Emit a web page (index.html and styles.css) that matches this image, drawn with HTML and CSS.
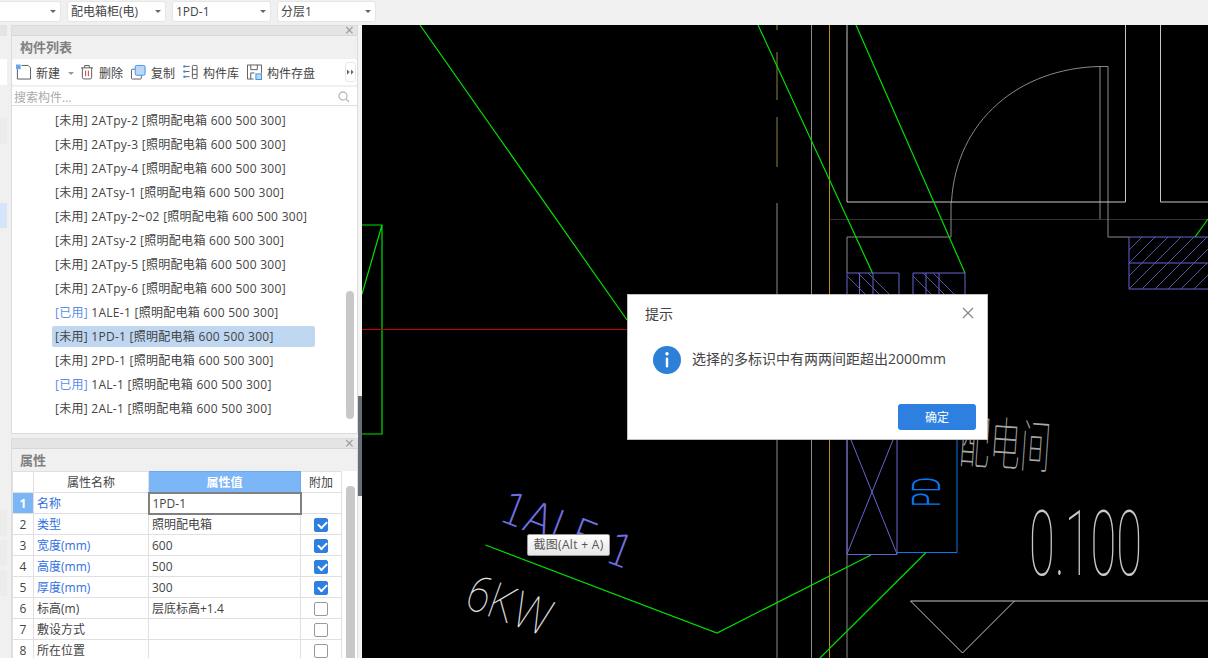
FILE: index.html
```html
<!DOCTYPE html>
<html lang="zh-CN">
<head>
<meta charset="utf-8">
<title>构件列表</title>
<link rel="stylesheet" href="styles.css">
</head>
<body>
<div class="app">
  <header class="topbar">
    <div class="select select-first"><span class="caret"></span></div>
    <div class="select"><span>配电箱柜(电)</span><span class="caret"></span></div>
    <div class="select"><span>1PD-1</span><span class="caret"></span></div>
    <div class="select"><span>分层1</span><span class="caret"></span></div>
  </header>
  <main class="main">
    <aside class="strip">
      <div class="strip-a"></div><div class="strip-b"></div><div class="strip-c"></div><div class="strip-d"></div>
      <div class="strip-e"></div><div class="strip-f"></div><div class="strip-f"></div><div class="strip-f"></div>
    </aside>
    <section class="panels">
      <div class="panel panel-list">
        <div class="grip"><span class="grip-x">×</span></div>
        <h2 class="panel-title">构件列表</h2>
        <div class="toolbar">
          <span class="tool tool-new">
            <svg class="ico" viewBox="0 0 16 16"><path class="s-dark" d="M1.500 5v10.500h14V3.500L13 1H6"/><rect class="f-dots" x="0" y="0" width="5" height="5"/></svg>新建<span class="tool-caret"></span></span>
          <span class="tool tool-del">
            <svg class="ico ico-trash" viewBox="0 0 13 16"><path class="s-dark" d="M0 3.500h13M4 3.500V1h5v2.500M1.500 3.500V14q0 1.500 1.500 1.500h7q1.500 0 1.500-1.500V3.500"/><path class="s-red" d="M5 6.500v6M8 6.500v6"/></svg>删除</span>
          <span class="tool tool-copy">
            <svg class="ico" viewBox="0 0 16 16"><path class="s-dark" d="M4 5H1.500q-1 0-1 1v8.500q0 1 1 1H10q1 0 1-1V12"/><rect class="f-blue" x="4.500" y="1" width="10.500" height="10.500" rx="1.500"/></svg>复制</span>
          <span class="tool tool-lib">
            <svg class="ico" viewBox="0 0 16 16"><path class="s-cyan" d="M1 2h6M1 7.500h6M1 13h6"/><circle class="dot" cx="1.500" cy="2" r="1.300"/><circle class="dot" cx="1.500" cy="7.500" r="1.300"/><circle class="dot" cx="1.500" cy="13" r="1.300"/><rect class="s-dark" x="10" y="1" width="5" height="14" rx="1"/><path class="s-dark" d="M10 5.500h5M10 10.500h5"/></svg>构件库</span>
          <span class="tool tool-save">
            <svg class="ico" viewBox="0 0 16 16"><path class="s-dark" d="M7 15.500H.5V.5h15V9M4 .5v5h7v-5M4 15.500V9h4"/><rect class="f-blue" x="9.500" y="10" width="6" height="6"/></svg>构件存盘</span>
          <span class="more"><svg class="more-ico" viewBox="0 0 8 6"><path d="M0 0l3 3-3 3zM4.500 0l3 3-3 3z"/></svg></span>
        </div>
        <div class="search"><span>搜索构件...</span>
          <svg class="search-ico" viewBox="0 0 12 12"><circle cx="5" cy="5" r="4"/><path d="M8 8l3 3"/></svg>
        </div>
        <div class="list">
          <ul class="rows">
            <li><span>[未用]</span> 2ATpy-2 [照明配电箱 600 500 300]</li>
            <li><span>[未用]</span> 2ATpy-3 [照明配电箱 600 500 300]</li>
            <li><span>[未用]</span> 2ATpy-4 [照明配电箱 600 500 300]</li>
            <li><span>[未用]</span> 2ATsy-1 [照明配电箱 600 500 300]</li>
            <li><span>[未用]</span> 2ATpy-2~02 [照明配电箱 600 500 300]</li>
            <li><span>[未用]</span> 2ATsy-2 [照明配电箱 600 500 300]</li>
            <li><span>[未用]</span> 2ATpy-5 [照明配电箱 600 500 300]</li>
            <li><span>[未用]</span> 2ATpy-6 [照明配电箱 600 500 300]</li>
            <li><span class="used">[已用]</span> 1ALE-1 [照明配电箱 600 500 300]</li>
            <li class="selected"><span>[未用]</span> 1PD-1 [照明配电箱 600 500 300]</li>
            <li><span>[未用]</span> 2PD-1 [照明配电箱 600 500 300]</li>
            <li><span class="used">[已用]</span> 1AL-1 [照明配电箱 600 500 300]</li>
            <li><span>[未用]</span> 2AL-1 [照明配电箱 600 500 300]</li>
          </ul>
          <div class="scroll scroll-list"></div>
        </div>
      </div>
      <div class="panel panel-props">
        <div class="grip"><span class="grip-x">×</span></div>
        <h2 class="panel-title">属性</h2>
        <div class="props">
          <table class="ptable">
            <thead><tr><th class="c-idx"></th><th class="c-name">属性名称</th><th class="c-val active">属性值</th><th class="c-add">附加</th></tr></thead>
            <tbody>
              <tr><td class="idx idx-on">1</td><td class="link">名称</td><td class="edit">1PD-1</td><td></td></tr>
              <tr><td class="idx">2</td><td class="link">类型</td><td>照明配电箱</td><td class="chk"><span class="box on"></span></td></tr>
              <tr><td class="idx">3</td><td class="link">宽度(mm)</td><td>600</td><td class="chk"><span class="box on"></span></td></tr>
              <tr><td class="idx">4</td><td class="link">高度(mm)</td><td>500</td><td class="chk"><span class="box on"></span></td></tr>
              <tr><td class="idx">5</td><td class="link">厚度(mm)</td><td>300</td><td class="chk"><span class="box on"></span></td></tr>
              <tr><td class="idx">6</td><td>标高(m)</td><td>层底标高+1.4</td><td class="chk"><span class="box"></span></td></tr>
              <tr><td class="idx">7</td><td>敷设方式</td><td></td><td class="chk"><span class="box"></span></td></tr>
              <tr><td class="idx">8</td><td>所在位置</td><td></td><td class="chk"><span class="box"></span></td></tr>
            </tbody>
          </table>
          <div class="scroll scroll-props"></div>
        </div>
      </div>
    </section>
    <div class="splitter"><div class="handle"></div></div>
    <section class="canvas">
      <svg class="cad" viewBox="362 25 846 633" width="846" height="633">
        <g class="c-dim"><path d="M829 219.500H1208"/></g>
        <g class="c-olive"><path d="M777 25v5M777 52v48M777 117v50"/></g>
        <g class="c-gray">
          <path d="M777 203V658M811.500 25V658"/>
          <path d="M847 439V658"/>
          <path d="M847 273V237H951V202M1100 219V66.500H1108V237H1129"/>
          <path d="M951.500 202C956 120 1020 68 1100 66.500"/>
        </g>
        <g class="c-white">
          <path d="M847 25V202H1125.500V25M1160.500 25V202H1208"/>
          <path d="M910.500 601H1208M1014.500 601L962.500 653L910.500 601"/>
        </g>
        <path class="c-orange" d="M829.500 25V658"/>
        <g class="c-purple">
          <path d="M847 294V273H899V294M859.500 273V294M873 273V294M913 294V273H965V294M926 273V294M939 273V294"/>
          <path class="thin" d="M847 276L865 294M858 273L879 294M868 273L889 294M913 276L931 294M923 273L944 294M933 273L954 294"/>
          <path d="M1129 289V237H1208M1129 263H1208M1129 289H1208"/>
          <path class="thin" d="M1129 250L1142 237M1129 263L1155 237M1142 263L1168 237M1155 263L1181 237M1168 263L1194 237M1181 263L1207 237M1194 263L1208 249M1129 276L1142 263M1129 289L1155 263M1142 289L1168 263M1155 289L1181 263M1168 289L1194 263M1181 289L1207 263M1194 289L1208 275"/>
          <path d="M847 430V554.500H897V430"/>
          <path d="M847 554L897 430M847 430L897 554"/>
        </g>
        <path class="c-blue" d="M897 552.500H957V430"/>
        <g class="c-green">
          <path d="M420 25L627 320M758 25L872.500 273M856 25L965 273M1208 219L1195 237"/>
          <path d="M362 225H382V434H362M382 225L362 294"/>
          <path d="M485.500 545L717 633L871 555M926 552.500L820 658"/>
        </g>
        <path class="c-red" d="M362 329.500H627"/>
        <text class="t-pd" transform="translate(940 507) rotate(-90) scale(.62 1)">PD</text>
        <text class="t-num" transform="translate(1029 575) scale(.98 1.9)">0.100</text>
        <text class="t-room" transform="translate(958 462) rotate(4) scale(.85 1.6)">配电间</text>
        <text class="t-tag" transform="translate(497 520) rotate(21) scale(1.1 1.25)">1ALE-1</text>
        <text class="t-kw" transform="translate(463 607) rotate(20) scale(1.15 1.4)">6KW</text>
      </svg>
      <div class="tooltip">截图(Alt + A)</div>
      <div class="dialog">
        <div class="dlg-head"><span>提示</span>
          <svg class="dlg-x" viewBox="0 0 12 12"><path d="M1 1l10 10M11 1L1 11"/></svg>
        </div>
        <div class="dlg-body">
          <svg class="dlg-ico" viewBox="0 0 28 28"><circle cx="14" cy="14" r="14"/><rect x="12.800" y="11.500" width="2.400" height="10" rx="1.200"/><circle cx="14" cy="7.800" r="1.700"/></svg>
          <p>选择的多标识中有两两间距超出2000mm</p>
        </div>
        <div class="dlg-foot"><button class="ok">确定</button></div>
      </div>
    </section>
  </main>
</div>
</body>
</html>
```
FILE: styles.css
```css
* { box-sizing: border-box; }
html, body { margin: 0; padding: 0; height: 100%; overflow: hidden; }
body {
  font-family: "Open Sans", "Noto Sans CJK SC", sans-serif;
  font-size: 12px;
  color: #444;
  background: #f0f0f0;
}
.app { width: 1208px; height: 658px; display: flex; flex-direction: column; }

.topbar {
  height: 25px;
  flex: none;
  display: flex;
  gap: 6px;
  padding: 1px 0 0;
  margin-left: -38px;
  background: #f0f0f0;
}
.select {
  width: 99px;
  height: 21px;
  display: flex;
  align-items: center;
  justify-content: space-between;
  padding: 0 4px 0 3px;
  font-size: 12px;
  line-height: 21px;
  background: #fff;
  border: 1px solid #e6e6e6;
  border-radius: 3px;
  color: #444;
}
.select-first { justify-content: flex-end; }
.caret {
  width: 0; height: 0;
  border-left: 3px solid transparent;
  border-right: 3px solid transparent;
  border-top: 3px solid #666;
}

.main { flex: 1; display: flex; min-height: 0; }

.strip { width: 11px; flex: none; display: flex; flex-direction: column; }
.strip div { width: 7px; background: #e8e8e8; }
.strip-a { height: 11px; background: #e4e4e4 !important; }
.strip-b { height: 23px; background: #f0f0f0 !important; }
.strip-c { height: 26px; background: #fff !important; margin-bottom: 33px; }
.strip-d { height: 26px; background: #ececec !important; margin-bottom: 59px; }
.strip-e { height: 25px; background: #d5e6fa !important; margin-bottom: 282px; }
.strip-f { height: 26px; background: #ececec !important; margin-bottom: 4px; }

.panels { width: 347px; flex: none; display: flex; flex-direction: column; gap: 4px; }
.panel { display: flex; flex-direction: column; background: #f0f0f0; border-left: 1px solid #dcdcdc; border-right: 1px solid #dcdcdc; }
.panel-list { height: 409px; }
.panel-props { flex: 1; min-height: 0; }
.grip {
  height: 11px;
  flex: none;
  background: #e4e4e4;
  border-top: 1px solid #dcdcdc;
  border-bottom: 1px solid #d6d6d6;
  display: flex;
  justify-content: flex-end;
  align-items: center;
  padding-right: 3px;
}
.grip-x { font-size: 16px; line-height: 9px; color: #999; }
.panel-title {
  margin: 0;
  height: 22px;
  flex: none;
  padding-left: 8px;
  font-size: 13px;
  line-height: 22px;
  font-weight: 700;
  color: #808080;
}
.toolbar {
  height: 26px;
  margin-top: 1px;
  flex: none;
  display: flex;
  align-items: center;
  padding-left: 4px;
  background: #fff;
  border-radius: 3px;
  position: relative;
  color: #444;
}
.tool { display: flex; align-items: center; gap: 5px; padding-top: 2px; }
.ico { width: 15px; height: 16px; flex: none; fill: none; margin-top: -2px; }
.ico-trash { width: 12px; margin-right: 1px; }
.s-dark { fill: none; stroke: #555; stroke-width: 1; }
.s-red { fill: none; stroke: #c83030; stroke-width: 1; }
.s-cyan { fill: none; stroke: #555; stroke-width: 1; }
.dot { fill: #3d8fe0; }
.f-dots { fill: #6aa6e8; }
.f-blue { fill: #bcd6f5; stroke: #3d8fe0; stroke-width: 1; }
.tool-new { width: 65px; }
.tool-caret {
  width: 0; height: 0; margin-left: 3px;
  border-left: 3px solid transparent;
  border-right: 3px solid transparent;
  border-top: 3px solid #999;
}
.tool-del { width: 50px; }
.tool-copy { width: 52px; }
.tool-lib { width: 64px; }
.more {
  position: absolute;
  right: 1px;
  top: 3px;
  width: 11px;
  height: 20px;
  display: flex;
  align-items: center;
  justify-content: center;
  border: 1px solid #e8e8e8;
  border-radius: 3px;
}
.more-ico { width: 7px; height: 6px; fill: #666; }
.search {
  margin-top: 2px;
  height: 18px;
  flex: none;
  display: flex;
  align-items: center;
  justify-content: space-between;
  padding: 1px 7px 0 2px;
  background: #fff;
  color: #aaa;
}
.search-ico { width: 12px; height: 12px; fill: none; stroke: #bbb; stroke-width: 1.300; }
.list {
  flex: 1;
  background: #fff;
  border-top: 1px solid #e0e0e0;
  border-bottom: 1px solid #dcdcdc;
  position: relative;
}
.rows { list-style: none; margin: 0; padding: 4px 0 0 40px; letter-spacing: .27px; }
.rows li {
  width: 263px;
  height: 21px;
  margin-bottom: 3px;
  padding-left: 3px;
  line-height: 21px;
  white-space: nowrap;
  border-radius: 2px;
  color: #444;
}
.used { color: #5b8de8; }
.rows .selected { background: #bfd7f0; }
.scroll { position: absolute; background: #c8c8c8; border-radius: 4px; }
.scroll-list { left: 334px; top: 185px; width: 8px; height: 128px; }

.props { flex: 1; min-height: 0; position: relative; background: #fff; overflow: hidden; }
.ptable {
  width: 330px;
  table-layout: fixed;
  border-collapse: collapse;
  font-size: 12px;
  color: #444;
}
.ptable th, .ptable td {
  height: 21px;
  padding: 0 3px;
  border: 1px solid #e0e0e0;
  font-weight: 400;
  white-space: nowrap;
}
.ptable th { height: 21px; text-align: center; }
.c-idx { width: 21px; }
.c-name { width: 115px; }
.c-val { width: 152px; }
.c-add { width: 41px; }
.ptable .active { background: #7db6f7; color: #fff; font-weight: 700; border-color: #6aa8f0; }
.ptable .idx { text-align: center; padding: 0; }
.ptable .idx-on { background: #7db6f7; color: #fff; font-weight: 700; }
.link { color: #2f6fe0; }
.ptable .edit { border: 2px solid #808080; }
.chk { text-align: center; }
.box {
  display: inline-block;
  width: 14px;
  height: 14px;
  vertical-align: middle;
  border: 1px solid #999;
  border-radius: 2px;
  background: #fff;
  position: relative;
}
.box.on { background: #2d80e0; border-color: #2d80e0; }
.box.on::after {
  content: "";
  position: absolute;
  left: 3px;
  top: 2px;
  width: 7px;
  height: 4px;
  border-left: 2px solid #fff;
  border-bottom: 2px solid #fff;
  transform: rotate(-45deg);
}
.scroll-props { left: 334px; top: 15px; width: 9px; height: 190px; }

.splitter { width: 4px; flex: none; padding-top: 371px; background: #f4f4f4; }
.handle { height: 100px; background: #666e7a; }

.canvas { flex: 1; position: relative; background: #000; overflow: hidden; }
.cad { display: block; fill: none; }
.cad path { stroke-width: 1; fill: none; }
.c-dim path { stroke: #333; }
.c-olive path { stroke: #46421e; stroke-width: 2; }
.c-gray path { stroke: #8a8a8a; }
.c-white path { stroke: #c8c8c8; }
.cad .c-orange { stroke: #c08a10; }
.c-purple path { stroke: #6464d0; }
.c-purple .thin { stroke: #5555b0; }
.cad .c-blue { stroke: #0a78f0; }
.cad .c-green path { stroke: #00e000; stroke-width: 1.200; }
.cad .c-red { stroke: #d00000; }
.cad text { font-family: "Roboto", sans-serif; font-weight: 100; }
.cad .t-pd { fill: #0a78f0; font-size: 38px; font-weight: 300; }
.t-num { fill: #c8c8c8; font-size: 48px; }
.cad .t-room { fill: #a8a8a8; font-size: 36px; font-family: "Noto Sans CJK SC", sans-serif; }
.cad .t-tag { fill: #6f6fe0; font-size: 36px; font-family: "DejaVu Sans", sans-serif; font-weight: 200; }
.t-kw { fill: #e0e0e0; font-size: 36px; }

.tooltip {
  position: absolute;
  left: 165px;
  top: 509px;
  width: 83px;
  height: 22px;
  text-align: center;
  line-height: 20px;
  font-size: 12px;
  letter-spacing: .3px;
  color: #555;
  background: linear-gradient(#ffffff, #e6e6e6);
  border: 1px solid #999;
  border-radius: 2px;
}
.dialog {
  position: absolute;
  left: 265px;
  top: 269px;
  width: 361px;
  height: 146px;
  display: flex;
  flex-direction: column;
  background: #fff;
  border: 1px solid #c0c0c0;
}
.dlg-head {
  height: 36px;
  flex: none;
  padding: 0 13px 0 17px;
  display: flex;
  align-items: center;
  justify-content: space-between;
  font-size: 14px;
  color: #444;
}
.dlg-x { width: 12px; height: 12px; fill: none; stroke: #888; stroke-width: 1.200; }
.dlg-body { display: flex; align-items: center; gap: 11px; padding: 15px 0 0 25px; }
.dlg-ico { width: 28px; height: 28px; flex: none; }
.dlg-ico circle:first-child { fill: #2d80d8; }
.dlg-ico rect, .dlg-ico circle + rect + circle { fill: #fff; }
.dlg-body p { margin: 0 0 2px; font-size: 14px; line-height: 20px; color: #444; white-space: nowrap; }
.dlg-foot { margin-top: auto; padding: 0 11px 9px 0; display: flex; justify-content: flex-end; }
.ok {
  width: 78px;
  height: 26px;
  padding: 0;
  font: inherit;
  font-size: 12px;
  color: #fff;
  background: #2d80e0;
  border: 0;
  border-radius: 3px;
}
```
